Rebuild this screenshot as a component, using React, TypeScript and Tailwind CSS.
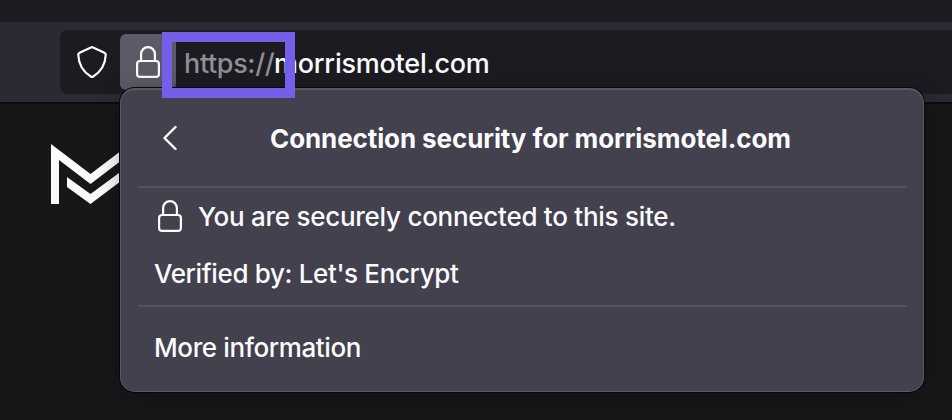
function LockIcon() {
  return (
    <svg className="h-8 w-6 shrink-0" viewBox="0 0 24 32" fill="none" stroke="#fbfbfe" strokeWidth="2.2">
      <path d="M5.100 14V8a6.900 6.900 0 0 1 13.800 0v6" />
      <rect x="1.100" y="15" width="21.800" height="15.900" rx="3" />
    </svg>
  );
}

function ShieldIcon() {
  return (
    <svg className="h-8 w-[30px] shrink-0" viewBox="0 0 30 32" fill="none" stroke="#fbfbfe" strokeWidth="2.2" strokeLinejoin="round">
      <path d="M13.900 1.400a2.400 2.400 0 0 1 2.200 0L27.400 6.800a2.200 2.200 0 0 1 1.300 2.200C28.300 18.500 23.500 26 16.200 30.500a2.200 2.200 0 0 1-2.400 0C6.500 26 1.700 18.500 1.300 9a2.200 2.200 0 0 1 1.300-2.200z" />
    </svg>
  );
}

function SiteLogo() {
  return (
    <svg className="h-[60px] w-20" viewBox="0 0 80 60" fill="#fbfbfb">
      <path d="M0 0L39.500 30L79 0V60H71V16L39.500 40L8 16V60H0z" />
      <path d="M16 33L39.500 50L72 26V35.500L39.500 60L16 43z" />
    </svg>
  );
}

function SecurityPanel() {
  return (
    <section className="absolute left-[120px] top-[88px] h-[304px] w-[804px] rounded-[15px] border border-t-2 border-[#5a5963] bg-[#42414d] pl-[17px] pr-4 shadow-[0_0_0_1px_#08080a,0_4px_24px_rgba(0,0,0,0.3)]">
      <header className="flex h-[98px] items-center border-b-2 border-[#52515e]">
        <svg className="ml-[25px] h-6 w-[14px] shrink-0" viewBox="0 0 14 24" fill="none" stroke="#fbfbfe" strokeWidth="2.400" strokeLinecap="round" strokeLinejoin="round">
          <path d="M12.500 1L1.500 12L12.500 23" />
        </svg>
        <h1 className="ml-[93px] pt-0.5 text-[26px] font-bold leading-8 tracking-[-0.1px]">Connection security for morrismotel.com</h1>
      </header>
      <div className="h-[119px] border-b-2 border-[#52515e] pl-4 pt-3">
        <div className="flex h-8 items-center">
          <div className="ml-1 flex"><LockIcon /></div>
          <p className="ml-4 pt-0.5 text-[26px] font-[450] leading-8 tracking-[-0.27px]">You are securely connected to this site.</p>
        </div>
        <p className="mt-[26px] text-[26px] font-[450] leading-8 tracking-[-0.36px]">Verified by: Let's Encrypt</p>
      </div>
      <button className="mt-[25px] block pl-4 text-[26px] font-[450] leading-8 tracking-[-0.39px]">More information</button>
    </section>
  );
}

export default function App() {
  return (
    <div className="relative h-[420px] w-[952px] overflow-hidden whitespace-nowrap bg-[#161719] font-[Inter,sans-serif] text-[#fbfbfe]">
      <div className="h-[22px] bg-[#1c1b21]" />
      <div className="flex h-[82px] border-b-2 border-[#0c0c0e] bg-[#2b2a32] pl-[60px] pt-2">
        <div className="flex h-16 flex-1 items-center rounded-l-lg bg-[#1c1b21]">
          <div className="ml-[17px] flex"><ShieldIcon /></div>
          <div className="ml-[13px] flex h-14 w-14 items-center justify-center rounded-md bg-[#5b5a66]">
            <LockIcon />
          </div>
          <div className="ml-2 flex pt-[3px] text-[27px] font-[450] leading-8">
            <span className="w-[90px] tracking-[-0.35px] text-[#8f8f94]">https://</span>
            <span className="tracking-[-0.24px]">morrismotel.com</span>
          </div>
        </div>
      </div>
      <div className="pl-[51px] pt-10"><SiteLogo /></div>
      <SecurityPanel />
      <div className="absolute left-[162px] top-8 h-[66px] w-[133px] border-[10px] border-[#745fe9]" />
    </div>
  );
}
